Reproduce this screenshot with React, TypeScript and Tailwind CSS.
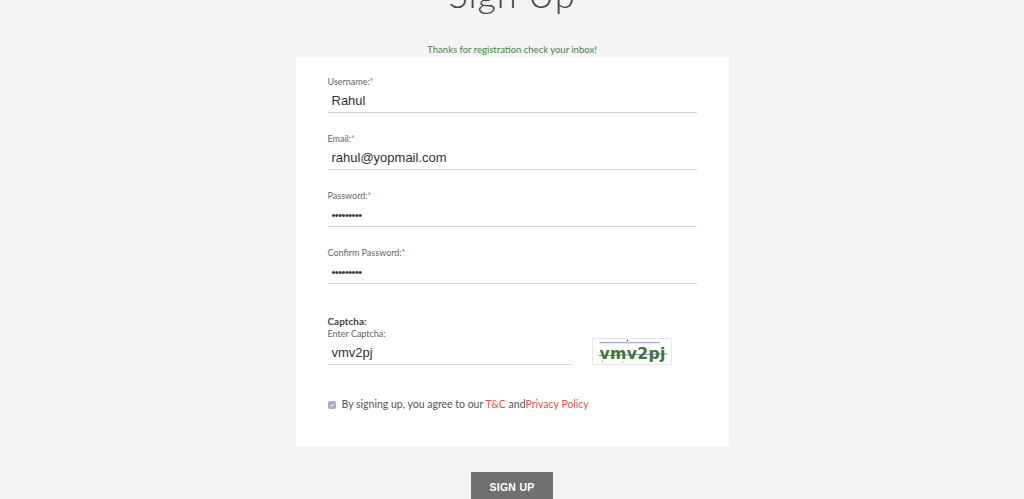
import React from "react";

const labelFont = { fontFamily: "Lato, 'Open Sans', sans-serif" };

function Field({ label, value, secret }: { label: string; value: string; secret?: boolean }) {
  return (
    <div className="flex flex-col">
      <label className="text-[9px] leading-[11px] text-[#666]" style={labelFont}>
        {label}
        <span className="text-[#e05a4a]">*</span>
      </label>
      <div
        className={
          secret
            ? "h-[25px] px-[4px] pt-[6px] text-[11px] leading-[16px] tracking-[-0.5px] text-[#333] font-['Liberation_Sans',Arial,sans-serif]"
            : "h-[25px] px-[4px] pt-[6px] text-[13px] leading-[16px] text-[#333] font-['Liberation_Sans',Arial,sans-serif]"
        }
      >
        {value}
      </div>
      <div className="h-px bg-[#d6d6d6]" />
    </div>
  );
}

function Captcha() {
  return (
    <svg width="80" height="27" viewBox="0 0 80 27" className="border border-[#e8e8e8] bg-white">
      <line x1="5" y1="4" x2="70" y2="4" stroke="#5a6aa8" strokeWidth="0.8" />
      <circle cx="35" cy="1.5" r="0.8" fill="#335" />
      <text x="5" y="22" fill="#3a7a30" fontFamily="'DejaVu Sans', sans-serif" fontWeight="bold" fontSize="17" letterSpacing="0.3">
        vmv2pj
      </text>
      <line x1="4" y1="18" x2="78" y2="16" stroke="#4a5aa0" strokeWidth="0.8" />
      <circle cx="8" cy="24" r="0.7" fill="#6a7ab0" />
      <circle cx="30" cy="25" r="0.6" fill="#6a7ab0" />
    </svg>
  );
}

export default function App() {
  return (
    <div className="min-h-screen bg-[#f4f4f4] flex flex-col items-center overflow-hidden">
      <h1
        className="mt-[-28px] text-[36px] leading-[44px] font-light text-[#444] tracking-wide"
        style={labelFont}
      >
        Sign Up
      </h1>
      <p className="mt-[28px] text-[9.5px] leading-[12px] text-[#3d8a3a]" style={labelFont}>
        Thanks for registration check your inbox!
      </p>
      <div className="mt-[1px] w-[433px] bg-white px-8 pt-[19px] pb-[33px] flex flex-col">
        <div className="flex flex-col gap-[20px]">
          <Field label="Username:" value="Rahul" />
          <Field label="Email:" value="rahul@yopmail.com" />
          <Field label="Password:" value="•••••••••" secret />
          <Field label="Confirm Password:" value="•••••••••" secret />
        </div>
        <div className="mt-[31px] flex items-end gap-[20px]">
          <div className="flex flex-col w-[244px]">
            <span className="text-[10px] leading-[12px] font-bold text-[#444]" style={labelFont}>
              Captcha:
            </span>
            <span className="mt-[1px] text-[9px] leading-[11px] text-[#666]" style={labelFont}>
              Enter Captcha:
            </span>
            <div className="h-[25px] px-[4px] pt-[6px] text-[13px] leading-[16px] text-[#333] font-['Liberation_Sans',Arial,sans-serif]">
              vmv2pj
            </div>
            <div className="h-px bg-[#d6d6d6]" />
          </div>
          <Captcha />
        </div>
        <div className="mt-[32px] flex items-center gap-[6px]">
          <span className="w-[8px] h-[8px] rounded-[2px] bg-[#a7a9c4] flex items-center justify-center">
            <svg width="6" height="6" viewBox="0 0 6 6">
              <path d="M1 3.2 L2.4 4.6 L5 1.6" stroke="white" strokeWidth="1" fill="none" />
            </svg>
          </span>
          <span className="text-[10.5px] text-[#555]" style={labelFont}>
            By signing up, you agree to our <span className="text-[#e2563c]">T&amp;C</span> and
            <span className="text-[#e2563c]">Privacy Policy</span>
          </span>
        </div>
      </div>
      <button className="mt-[26px] w-[82px] h-[32px] bg-[#707070] text-white text-[10.5px] font-bold tracking-wide font-['Liberation_Sans',Arial,sans-serif]">
        SIGN UP
      </button>
    </div>
  );
}
